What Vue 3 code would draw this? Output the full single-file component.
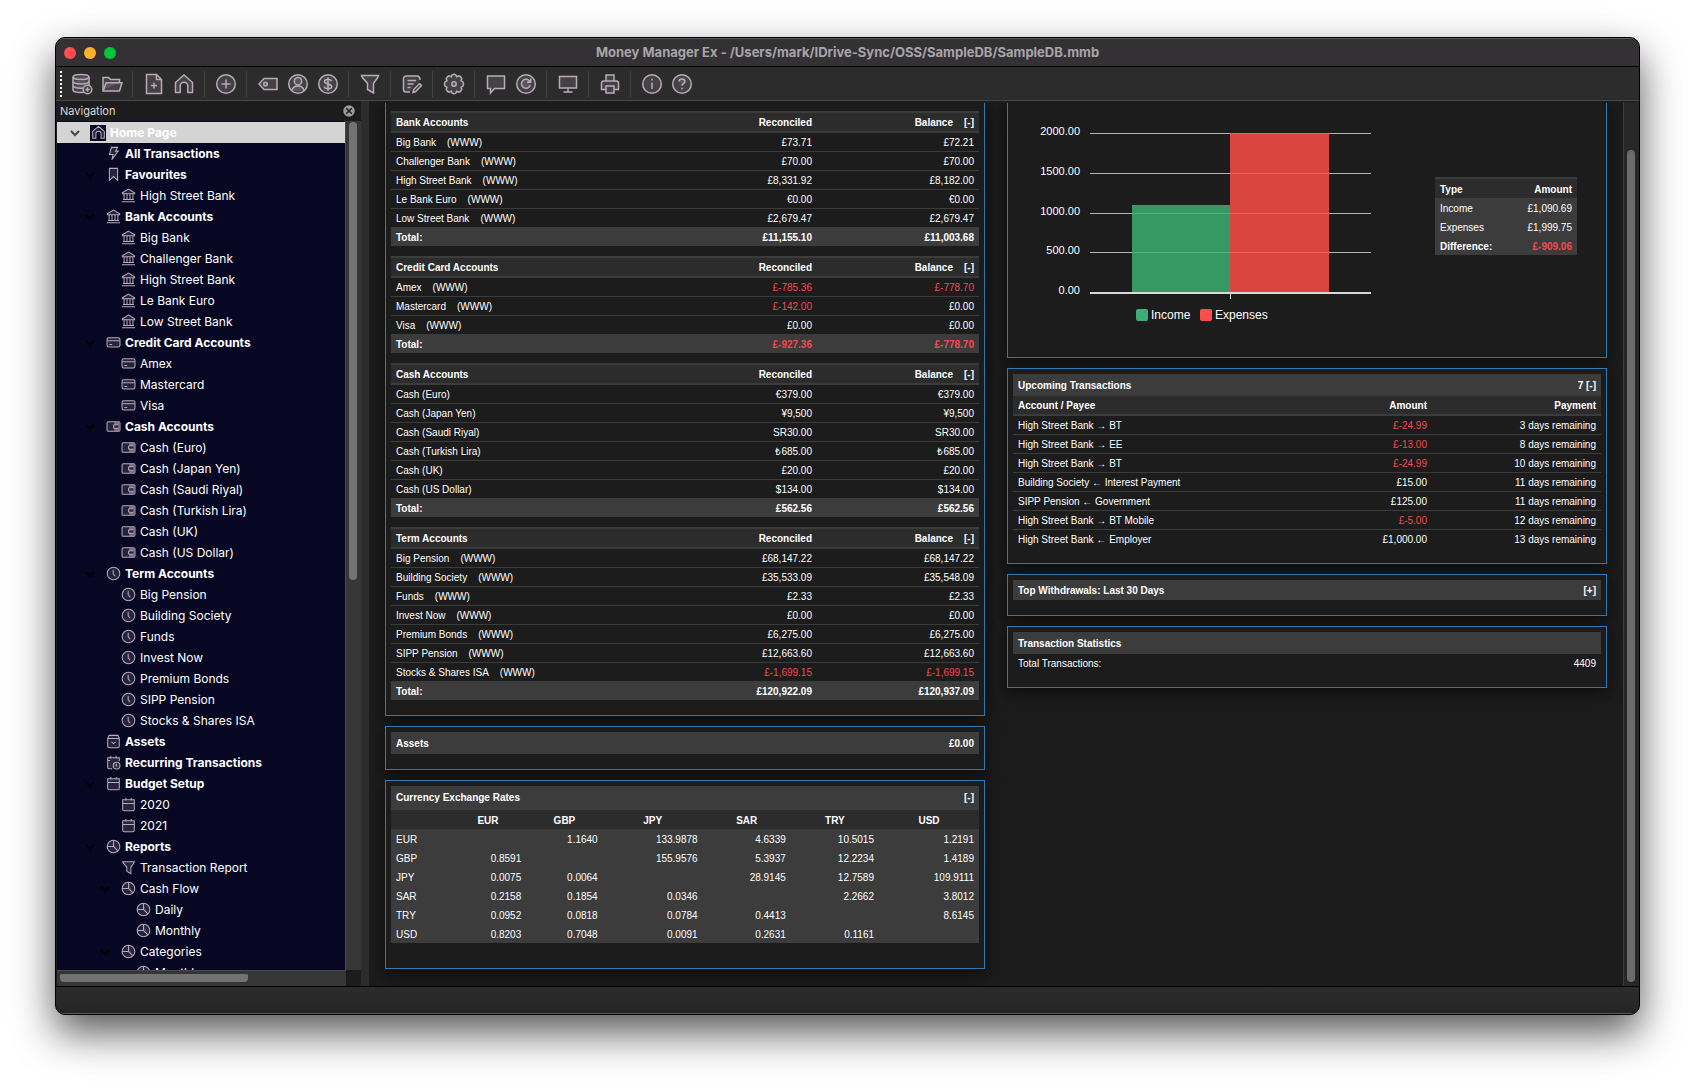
<script setup>
const toolGroups = [
  [
    { id: 'database', label: 'New database' },
    { id: 'folder', label: 'Open database' },
  ],
  [
    { id: 'file', label: 'New account' },
    { id: 'home', label: 'Home page' },
  ],
  [{ id: 'plus', label: 'New transaction' }],
  [
    { id: 'tag', label: 'Categories' },
    { id: 'user', label: 'Payees' },
    { id: 'dollar', label: 'Currencies' },
  ],
  [{ id: 'funnel', label: 'Transaction report' }],
  [{ id: 'edit', label: 'General report manager' }],
  [{ id: 'gear', label: 'Settings' }],
  [
    { id: 'speech', label: 'News' },
    { id: 'refresh', label: 'Refresh' },
  ],
  [{ id: 'monitor', label: 'Full screen' }],
  [{ id: 'printer', label: 'Print' }],
  [
    { id: 'info', label: 'About' },
    { id: 'help', label: 'Help' },
  ],
]

const leaf = (level, icon, names) => names.map((text) => ({ level, icon, text }))
const group = (level, icon, text) => ({ level, icon, text, open: true, bold: level < 2 })

const navigation = [
  { ...group(0, 'home', 'Home Page'), selected: true },
  { level: 1, icon: 'bolt', text: 'All Transactions', bold: true },
  group(1, 'bookmark', 'Favourites'),
  ...leaf(2, 'bank', ['High Street Bank']),
  group(1, 'bank', 'Bank Accounts'),
  ...leaf(2, 'bank', ['Big Bank', 'Challenger Bank', 'High Street Bank', 'Le Bank Euro', 'Low Street Bank']),
  group(1, 'card', 'Credit Card Accounts'),
  ...leaf(2, 'card', ['Amex', 'Mastercard', 'Visa']),
  group(1, 'wallet', 'Cash Accounts'),
  ...leaf(2, 'wallet', ['Cash (Euro)', 'Cash (Japan Yen)', 'Cash (Saudi Riyal)', 'Cash (Turkish Lira)', 'Cash (UK)', 'Cash (US Dollar)']),
  group(1, 'clock', 'Term Accounts'),
  ...leaf(2, 'clock', ['Big Pension', 'Building Society', 'Funds', 'Invest Now', 'Premium Bonds', 'SIPP Pension', 'Stocks & Shares ISA']),
  { level: 1, icon: 'box', text: 'Assets', bold: true },
  { level: 1, icon: 'recurring', text: 'Recurring Transactions', bold: true },
  group(1, 'calendar', 'Budget Setup'),
  ...leaf(2, 'calendar', ['2020', '2021']),
  group(1, 'pie', 'Reports'),
  ...leaf(2, 'funnel', ['Transaction Report']),
  group(2, 'pie', 'Cash Flow'),
  ...leaf(3, 'pie', ['Daily', 'Monthly']),
  group(2, 'pie', 'Categories'),
  ...leaf(3, 'pie', ['Monthly']),
]

const accountTables = [
  {
    title: 'Bank Accounts',
    rows: [
      ['Big Bank', '£73.71', '£72.21', true],
      ['Challenger Bank', '£70.00', '£70.00', true],
      ['High Street Bank', '£8,331.92', '£8,182.00', true],
      ['Le Bank Euro', '€0.00', '€0.00', true],
      ['Low Street Bank', '£2,679.47', '£2,679.47', true],
    ],
    total: ['£11,155.10', '£11,003.68'],
  },
  {
    title: 'Credit Card Accounts',
    rows: [
      ['Amex', '£-785.36', '£-778.70', true],
      ['Mastercard', '£-142.00', '£0.00', true],
      ['Visa', '£0.00', '£0.00', true],
    ],
    total: ['£-927.36', '£-778.70'],
  },
  {
    title: 'Cash Accounts',
    rows: [
      ['Cash (Euro)', '€379.00', '€379.00'],
      ['Cash (Japan Yen)', '¥9,500', '¥9,500'],
      ['Cash (Saudi Riyal)', 'SR30.00', 'SR30.00'],
      ['Cash (Turkish Lira)', '₺685.00', '₺685.00'],
      ['Cash (UK)', '£20.00', '£20.00'],
      ['Cash (US Dollar)', '$134.00', '$134.00'],
    ],
    total: ['£562.56', '£562.56'],
  },
  {
    title: 'Term Accounts',
    rows: [
      ['Big Pension', '£68,147.22', '£68,147.22', true],
      ['Building Society', '£35,533.09', '£35,548.09', true],
      ['Funds', '£2.33', '£2.33', true],
      ['Invest Now', '£0.00', '£0.00', true],
      ['Premium Bonds', '£6,275.00', '£6,275.00', true],
      ['SIPP Pension', '£12,663.60', '£12,663.60', true],
      ['Stocks & Shares ISA', '£-1,699.15', '£-1,699.15', true],
    ],
    total: ['£120,922.09', '£120,937.09'],
  },
]

const currencies = ['EUR', 'GBP', 'JPY', 'SAR', 'TRY', 'USD']
const rates = [
  ['', '1.1640', '133.9878', '4.6339', '10.5015', '1.2191'],
  ['0.8591', '', '155.9576', '5.3937', '12.2234', '1.4189'],
  ['0.0075', '0.0064', '', '28.9145', '12.7589', '109.9111'],
  ['0.2158', '0.1854', '0.0346', '', '2.2662', '3.8012'],
  ['0.0952', '0.0818', '0.0784', '0.4413', '', '8.6145'],
  ['0.8203', '0.7048', '0.0091', '0.2631', '0.1161', ''],
]

const upcoming = [
  ['High Street Bank → BT', '£-24.99', '3 days remaining'],
  ['High Street Bank → EE', '£-13.00', '8 days remaining'],
  ['High Street Bank → BT', '£-24.99', '10 days remaining'],
  ['Building Society ← Interest Payment', '£15.00', '11 days remaining'],
  ['SIPP Pension ← Government', '£125.00', '11 days remaining'],
  ['High Street Bank → BT Mobile', '£-5.00', '12 days remaining'],
  ['High Street Bank ← Employer', '£1,000.00', '13 days remaining'],
]

const gridLines = [
  { y: 30, label: '2000.00' },
  { y: 70, label: '1500.00' },
  { y: 110, label: '1000.00' },
  { y: 149, label: '500.00' },
  { y: 189, label: '0.00' },
]

const isNegative = (amount) => amount.includes('-')
</script>

<template>
  <svg class="sprite" aria-hidden="true">
    <symbol id="database" viewBox="0 0 22 22">
      <path d="M2 4v13c0 1.500 3.600 2.500 8 2.500s8-1 8-2.500V4" />
      <ellipse cx="10" cy="4" rx="8" ry="2.600" />
      <path d="M2 8.300c0 1.500 3.600 2.600 8 2.600s8-1.100 8-2.600M2 12.600c0 1.500 3.600 2.600 8 2.600s8-1.100 8-2.600" />
      <circle class="solid" cx="16.500" cy="16.500" r="4.300" />
      <path d="M16.500 14.300v4.400M14.300 16.500h4.400" />
    </symbol>
    <symbol id="folder" viewBox="0 0 22 22">
      <path d="M2 17V4.500h5.500l2 2h9V10" />
      <path d="M2 18l3.200-8.200H21L18.500 18z" />
    </symbol>
    <symbol id="file" viewBox="0 0 22 22">
      <path d="M3.500 1.500h10l5 5v14h-15zM13.500 1.500v5h5M11 9.500v6M8 12.500h6" />
    </symbol>
    <symbol id="home" viewBox="0 0 22 22">
      <path d="M2.500 9.500L11 2l8.500 7.500v10h-4.700V13a3.800 3.800 0 0 0-7.600 0v6.500H2.500z" />
    </symbol>
    <symbol id="plus" viewBox="0 0 22 22">
      <circle cx="11" cy="11" r="9.300" /><path d="M11 6.500v9M6.500 11h9" />
    </symbol>
    <symbol id="tag" viewBox="0 0 22 22">
      <path d="M2 11l5-5.500h13v11H7z" /><circle cx="8.500" cy="11" r="1.800" />
    </symbol>
    <symbol id="user" viewBox="0 0 22 22">
      <circle cx="11" cy="11" r="9.300" /><circle cx="11" cy="8.200" r="3.700" />
      <path d="M4.800 17.800c.8-3 3.200-4.700 6.200-4.700s5.400 1.700 6.200 4.700" />
    </symbol>
    <symbol id="dollar" viewBox="0 0 22 22">
      <circle cx="11" cy="11" r="9.300" />
      <path d="M14.500 8.200c-.3-1.300-1.600-2-3.500-2s-3.500.8-3.500 2.300c0 3.500 7.200 1.500 7.200 5 0 1.500-1.600 2.400-3.700 2.400s-3.500-.8-3.800-2.200M11 4.300v13.400" />
    </symbol>
    <symbol id="funnel" viewBox="0 0 22 22">
      <path d="M2.500 2.500h17c-.6 3.500-4.200 5.500-5 8v9.500l-6-3.500v-6c-.8-2.500-5.400-4.500-6-8z" />
    </symbol>
    <symbol id="edit" viewBox="0 0 22 22">
      <path d="M19 7V5.500L17.300 3H5a2.500 2.500 0 0 0-2.500 2.500v11A2.500 2.500 0 0 0 5 19h4M6.500 7.500H15M6.500 11h6M6.500 14.500h3" />
      <path d="M12 19.500l.6-3L18.500 10.500l2 2-5.800 6z" />
    </symbol>
    <symbol id="gear" viewBox="0 0 22 22">
      <path d="M9 2c1-.7 3-.7 4 0l.6 1.700 2.300-.9c1.300.4 2.500 1.600 2.900 2.900l-.7 2L20 9c.6 1.200.6 2.800 0 4l-1.900 1.300.7 2c-.4 1.300-1.600 2.500-2.900 2.900l-2.300-.9L13 20c-1 .7-3 .7-4 0l-.6-1.700-2.300.9c-1.300-.4-2.500-1.600-2.900-2.900l.7-2L2 13c-.6-1.200-.6-2.800 0-4l1.900-1.300-.7-2c.4-1.300 1.600-2.500 2.900-2.900l2.300.9z" />
      <circle cx="11" cy="11" r="2.200" />
    </symbol>
    <symbol id="speech" viewBox="0 0 22 22">
      <path d="M2.500 3h17v12.500H9.500L5.500 20v-4.500h-3z" />
    </symbol>
    <symbol id="refresh" viewBox="0 0 22 22">
      <circle cx="11" cy="11" r="9.300" />
      <path d="M15.300 12a4.500 4.500 0 1 1-1.300-4.500l1.500 1.500M15.700 5.500v3.700H12" />
    </symbol>
    <symbol id="monitor" viewBox="0 0 22 22">
      <path d="M2.500 3.500h17v11.500h-17zM11 15v3.800M6.500 19h9" />
    </symbol>
    <symbol id="printer" viewBox="0 0 22 22">
      <path d="M7 8V2h8v6M6.500 16.500h-4V10c0-1.200.8-2 2-2h13c1.200 0 2 .8 2 2v6.500h-4M7 13h8v7H7z" />
    </symbol>
    <symbol id="info" viewBox="0 0 22 22">
      <circle cx="11" cy="11" r="9.300" /><path d="M11 9.500v6.500M11 5.800v1.800" />
    </symbol>
    <symbol id="help" viewBox="0 0 22 22">
      <circle cx="11" cy="11" r="9.300" />
      <path d="M8 8.500C8 6.800 9.300 6 11 6s3 .9 3 2.500c0 2-3 2.200-3 4.200M11 14.700v1.600" />
    </symbol>
    <symbol id="bolt" viewBox="0 0 22 22">
      <path d="M8 2h9l-3 5.500h4L8.500 20l2-7.500H5z" />
    </symbol>
    <symbol id="bookmark" viewBox="0 0 22 22">
      <path d="M5 2h12v17.500l-6-5.500-6 5.500z" />
    </symbol>
    <symbol id="bank" viewBox="0 0 22 22">
      <path d="M2 7l9-5.500L20 7v1.500H2zM4.500 8.500V17M8.800 8.500V17M13.200 8.500V17M17.500 8.500V17M3 17h16M1.500 20h19" />
    </symbol>
    <symbol id="card" viewBox="0 0 22 22">
      <rect x="1.500" y="4" width="19" height="13.500" rx="2.500" /><path d="M2 8.500h18M5 14h4" />
    </symbol>
    <symbol id="wallet" viewBox="0 0 22 22">
      <rect x="1.500" y="4" width="19" height="14" rx="2" />
      <path class="bright" d="M12 4.500h8v13h-8v-3.500h-1.500v-6H12z" />
      <path class="notch" d="M18 8.500h-4.500a2.500 2.500 0 0 0 0 5H18" />
    </symbol>
    <symbol id="clock" viewBox="0 0 22 22">
      <circle cx="11" cy="11" r="9.300" /><path d="M10.500 5.500v6l3 3.500" />
    </symbol>
    <symbol id="box" viewBox="0 0 22 22">
      <path d="M2.500 6.500L4.500 2h13l2 4.500v11c0 1.500-1 2.500-2.500 2.500H5c-1.500 0-2.500-1-2.500-2.500zM2.500 6.500h17M8 11.500l3 2.500 3-2.500" />
    </symbol>
    <symbol id="calendar" viewBox="0 0 22 22">
      <path d="M2.500 4h17v14c0 1-.8 2-2 2h-13c-1.200 0-2-1-2-2zM2.500 9.500h17M7 1.500V5M15 1.500V5" />
    </symbol>
    <symbol id="recurring" viewBox="0 0 22 22">
      <path d="M9 20H4.500c-1.200 0-2-1-2-2V4h17v5M2.500 8H6M7 1.500V5M15 1.500V5" />
      <circle cx="15.500" cy="15.500" r="5" /><path d="M15 13v3h2" />
    </symbol>
    <symbol id="pie" viewBox="0 0 22 22">
      <circle cx="11" cy="11" r="9.300" /><path d="M11 1.700V11l6.500 6.500M1.700 11H11" />
    </symbol>
    <symbol id="chevron" viewBox="0 0 16 16">
      <path d="M4 6l4 4 4-4" />
    </symbol>
  </svg>

  <main class="window">
    <header class="titlebar">
      <div class="lights">
        <button class="light red" aria-label="Close"></button>
        <button class="light amber" aria-label="Minimise"></button>
        <button class="light green" aria-label="Zoom"></button>
      </div>
      <h1>Money Manager Ex - /Users/mark/IDrive-Sync/OSS/SampleDB/SampleDB.mmb</h1>
    </header>

    <nav class="toolbar" aria-label="Toolbar">
      <span class="grip"></span>
      <div v-for="(tools, index) in toolGroups" :key="index" class="tool-group">
        <button v-for="tool in tools" :key="tool.id" class="tool" :aria-label="tool.label">
          <svg class="icon"><use :href="'#' + tool.id" /></svg>
        </button>
      </div>
    </nav>

    <div class="workspace">
      <aside class="sidebar">
        <div class="pane-title">
          <h2>Navigation</h2>
          <button class="pane-close" aria-label="Close navigation">
            <svg viewBox="0 0 14 14"><circle cx="7" cy="7" r="6.500" /><path d="M4.200 4.200l5.600 5.600M9.800 4.200L4.200 9.800" /></svg>
          </button>
        </div>
        <div class="tree-area">
          <ul class="tree">
            <li v-for="(item, index) in navigation" :key="index" class="node" :class="['level-' + item.level, { bold: item.bold, selected: item.selected }]">
              <span class="twisty"><svg v-if="item.open"><use href="#chevron" /></svg></span>
              <a href="#"><svg class="icon"><use :href="'#' + item.icon" /></svg>{{ item.text }}</a>
            </li>
          </ul>
          <div class="vtrack"><div class="nav-vthumb"></div></div>
        </div>
        <div class="bottom-track"><div class="htrack"><div class="hthumb"></div></div></div>
      </aside>

      <div class="sash"></div>

      <section class="report">
        <div class="column">
          <article class="card cut accounts">
            <table v-for="table in accountTables" :key="table.title">
              <thead>
                <tr class="ruled">
                  <th>{{ table.title }}</th>
                  <th class="num">Reconciled</th>
                  <th class="num wide">Balance<a href="#" class="toggle">[-]</a></th>
                </tr>
              </thead>
              <tbody class="lined">
                <tr v-for="row in table.rows" :key="row[0]">
                  <td><a href="#">{{ row[0] }}</a><a v-if="row[3]" href="#" class="site">(WWW)</a></td>
                  <td class="num" :class="{ negative: isNegative(row[1]) }">{{ row[1] }}</td>
                  <td class="num" :class="{ negative: isNegative(row[2]) }">{{ row[2] }}</td>
                </tr>
              </tbody>
              <tfoot>
                <tr>
                  <th>Total:</th>
                  <th v-for="(sum, index) in table.total" :key="index" class="num" :class="{ negative: isNegative(sum) }">{{ sum }}</th>
                </tr>
              </tfoot>
            </table>
          </article>

          <article class="card">
            <div class="caption"><h3>Assets</h3><b>£0.00</b></div>
          </article>

          <article class="card rates">
            <div class="caption tall"><h3>Currency Exchange Rates</h3><a href="#">[-]</a></div>
            <table>
              <colgroup>
                <col class="c-name" /><col class="c-eur" /><col class="c-gbp" /><col class="c-jpy" /><col class="c-sar" /><col class="c-try" /><col />
              </colgroup>
              <thead>
                <tr>
                  <th></th>
                  <th v-for="code in currencies" :key="code">{{ code }}</th>
                </tr>
              </thead>
              <tbody>
                <tr v-for="(row, index) in rates" :key="index">
                  <td>{{ currencies[index] }}</td>
                  <td v-for="(rate, col) in row" :key="col" class="num">{{ rate }}</td>
                </tr>
              </tbody>
            </table>
          </article>
        </div>

        <div class="column">
          <article class="card cut summary">
            <svg class="chart" viewBox="0 0 400 254" role="img" aria-label="Income and expenses">
              <g v-for="line in gridLines" :key="line.y">
                <text x="72" :y="line.y + 2" text-anchor="end">{{ line.label }}</text>
                <rect class="grid" :class="{ base: line.y === 189 }" x="82" :y="line.y" width="281" />
              </g>
              <rect class="bar-income" x="124" y="102" width="98" height="87" />
              <rect class="bar-expenses" x="222" y="30" width="99" height="159" />
              <rect class="tick" x="222" y="191" width="1" height="5" />
              <rect class="key-income" x="128" y="206" width="12" height="12" rx="2" />
              <text class="legend" x="143" y="216">Income</text>
              <rect class="key-expenses" x="192" y="206" width="12" height="12" rx="2" />
              <text class="legend" x="207" y="216">Expenses</text>
            </svg>
            <table class="totals">
              <thead>
                <tr><th>Type</th><th class="num">Amount</th></tr>
              </thead>
              <tbody>
                <tr><td>Income</td><td class="num">£1,090.69</td></tr>
                <tr><td>Expenses</td><td class="num">£1,999.75</td></tr>
                <tr><th>Difference:</th><th class="num negative">£-909.06</th></tr>
              </tbody>
            </table>
          </article>

          <article class="card upcoming">
            <div class="caption"><h3>Upcoming Transactions</h3><b>7 <a href="#">[-]</a></b></div>
            <table>
              <thead>
                <tr>
                  <th>Account / Payee</th>
                  <th class="num">Amount</th>
                  <th class="num wide">Payment</th>
                </tr>
              </thead>
              <tbody class="lined">
                <tr v-for="(row, index) in upcoming" :key="index">
                  <td>{{ row[0] }}</td>
                  <td class="num" :class="{ negative: isNegative(row[1]) }">{{ row[1] }}</td>
                  <td class="num">{{ row[2] }}</td>
                </tr>
              </tbody>
            </table>
          </article>

          <article class="card">
            <div class="caption short"><h3>Top Withdrawals: Last 30 Days</h3><a href="#">[+]</a></div>
          </article>

          <article class="card">
            <div class="caption"><h3>Transaction Statistics</h3></div>
            <div class="stat"><span>Total Transactions:</span><span>4409</span></div>
          </article>
        </div>
      </section>

      <div class="page-track"><div class="page-thumb"></div></div>
    </div>

    <footer class="statusbar"></footer>
  </main>
</template>

<style>
body {
  margin: 0;
  background: #fff;
}
#app {
  overflow: hidden;
}
</style>

<style scoped>
.sprite {
  position: absolute;
  width: 0;
  height: 0;
}
.window {
  box-sizing: border-box;
  display: flex;
  flex-direction: column;
  height: calc(100vh - 110px);
  margin: 37px 55px 73px;
  border: 1px solid #000;
  border-radius: 10px;
  overflow: hidden;
  background: #1c1c1c;
  color: #fff;
  font-family: Inter, "Liberation Sans", sans-serif;
  box-shadow: 0 18px 40px rgba(0, 0, 0, 0.66);
}
button {
  padding: 0;
  border: 0;
  background: none;
}
a {
  color: inherit;
  text-decoration: none;
}
h1,
h2,
h3 {
  margin: 0;
}
.icon {
  fill: rgba(200, 185, 200, 0.16);
  stroke: #b9abb9;
  stroke-width: 1.5;
}
.solid {
  fill: #3a383a;
}
.bright {
  fill: #7f7288;
  stroke: none;
}
.notch {
  fill: #2a2440;
}

/* Title bar */
.titlebar {
  display: flex;
  flex: none;
  align-items: center;
  height: 29px;
  padding: 0 8px;
  border-top: 1px solid #5c5a5d;
  border-bottom: 1px solid #000;
  background: #343135;
  box-sizing: border-box;
}
.titlebar h1 {
  flex: 1;
  padding: 0 52px 2px 0;
  text-align: center;
  font-size: 13px;
  font-weight: 700;
  line-height: 24px;
  color: #a7a5a8;
}
.lights {
  display: flex;
  gap: 8px;
}
.light {
  width: 12px;
  height: 12px;
  border-radius: 50%;
}
.red {
  background: #ff4e4d;
}
.amber {
  background: #ffb12e;
}
.green {
  background: #00c73a;
}

/* Toolbar */
.toolbar {
  display: flex;
  flex: none;
  align-items: center;
  height: 33px;
  padding-left: 4px;
  background: #2c2c2c;
  border-bottom: 1px solid #484848;
}
.grip {
  width: 2px;
  height: 26px;
  margin-right: 5px;
  background: repeating-linear-gradient(#fff 0 2px, transparent 2px 4px);
}
.tool-group {
  display: flex;
}
.tool-group + .tool-group {
  margin-left: 5px;
  padding-left: 6px;
  border-left: 1px solid #444;
}
.tool {
  display: flex;
  align-items: center;
  justify-content: center;
  width: 30px;
  height: 26px;
}
.tool .icon {
  width: 22px;
  height: 22px;
}

/* Navigation pane */
.workspace {
  display: flex;
  flex: 1;
  min-height: 0;
  border-bottom: 1px solid #000;
}
.sidebar {
  display: flex;
  flex: none;
  flex-direction: column;
  width: 304px;
  padding-left: 1px;
  background: #1c1c1c;
}
.pane-title {
  display: flex;
  flex: none;
  align-items: center;
  justify-content: space-between;
  height: 20px;
  padding: 0 5px 0 3px;
}
.pane-title h2 {
  font-size: 11px;
  font-weight: 400;
  line-height: 20px;
  color: #d8d8d8;
}
.pane-close svg {
  display: block;
  width: 14px;
  height: 14px;
  fill: #9a9a9a;
  stroke: #1c1c1c;
  stroke-width: 1.5;
}
.tree-area {
  display: flex;
  flex: 1;
  min-height: 0;
}
.tree {
  flex: 1;
  margin: 0;
  padding: 1px 0 0;
  overflow: hidden;
  list-style: none;
  background: #080723;
}
.node {
  display: flex;
  align-items: center;
  height: 21px;
  font-size: 12px;
  line-height: 21px;
  white-space: nowrap;
}
.node a {
  display: flex;
  align-items: center;
  gap: 4px;
}
.node .icon {
  width: 15px;
  height: 15px;
  padding: 0 0 1px 1px;
}
.level-0 {
  padding-left: 10px;
}
.level-1 {
  padding-left: 25px;
}
.level-2 {
  padding-left: 40px;
}
.level-3 {
  padding-left: 55px;
}
.bold {
  font-weight: 700;
}
.selected {
  background: #d4d4d4;
}
.selected .icon {
  background: #080723;
}
.twisty {
  width: 16px;
  height: 16px;
  margin-right: 7px;
}
.twisty svg {
  display: block;
  width: 16px;
  height: 16px;
  fill: none;
  stroke: #000;
  stroke-width: 2;
}
.selected .twisty svg {
  stroke: #444;
}
.vtrack {
  width: 8px;
  padding: 1px 4px 0 3px;
  border-left: 1px solid #484848;
  background: #363636;
}
.nav-vthumb {
  height: 54%;
  border-radius: 4px;
  background: #737373;
}
.bottom-track {
  flex: none;
  height: 16px;
  padding-right: 15px;
}
.htrack {
  height: 15px;
  padding-left: 3px;
  border-top: 1px solid #484848;
  background: #363636;
}
.hthumb {
  width: 188px;
  height: 8px;
  border-radius: 4px;
  background: #737373;
  border-top: 3px solid #363636;
}
.sash {
  flex: none;
  width: 8px;
  background: #2c2c2c;
}

/* Report page */
.report {
  display: flex;
  flex: 1;
  align-items: flex-start;
  gap: 22px;
  min-width: 0;
  margin-top: 2px;
  padding: 0 16px;
  overflow: hidden;
  font: 10px/16px "Liberation Sans", Arial, sans-serif;
}
.column {
  display: flex;
  flex: 1;
  flex-direction: column;
  gap: 10px;
  min-width: 0;
}
.card {
  padding: 5px 5px 15px;
  border: 1px solid #3079b5;
  background: #1c1c1c;
  box-shadow: 0 4px 8px rgba(0, 0, 0, 0.2), 0 6px 20px rgba(0, 0, 0, 0.4);
}
.cut {
  padding-top: 8px;
  border-top: 0;
}
table {
  width: 100%;
  border-spacing: 0;
  table-layout: fixed;
}
th,
td {
  height: 16px;
  padding: 2px 5px 0;
  text-align: left;
  white-space: nowrap;
}
.num {
  text-align: right;
}
.negative {
  color: #f24a50;
}
.accounts {
  display: flex;
  flex-direction: column;
  gap: 10px;
}
.ruled th {
  border: solid #3c3c3c;
  border-width: 2px 0;
  background: #2c2c2c;
}
.wide {
  width: 152px;
}
.upcoming .wide {
  width: 159px;
}
.toggle {
  margin-left: 11px;
}
.site {
  margin-left: 11px;
}
.lined td {
  border-bottom: 1px solid #3c3c3c;
}
.upcoming tr:last-child td {
  border-bottom: 0;
}
.upcoming th {
  border-bottom: 2px solid #3c3c3c;
  background: #2c2c2c;
}
tfoot th {
  background: #3c3c3c;
}
.caption {
  display: flex;
  justify-content: space-between;
  padding: 4px 5px 2px;
  background: #3c3c3c;
  font-weight: 700;
}
.caption h3 {
  font-size: 10px;
}
.tall {
  padding: 4px 5px;
}
.short {
  padding: 3px 5px 1px;
}
.stat {
  display: flex;
  justify-content: space-between;
  padding: 2px 5px 0;
}
.rates {
  padding-bottom: 25px;
}
.rates thead th {
  height: 17px;
  background: #2c2c2c;
  text-align: center;
}
.rates td {
  height: 17px;
  background: #3c3c3c;
}
.c-name {
  width: 10%;
}
.c-eur,
.c-gbp {
  width: 13%;
}
.c-jpy {
  width: 17%;
}
.c-sar,
.c-try {
  width: 15%;
}

/* Income and expenses summary */
.summary {
  display: flex;
  align-items: flex-start;
  justify-content: space-between;
  padding: 0 29px 0 0;
}
.chart {
  width: 400px;
  height: 254px;
  fill: #fff;
  font-size: 11px;
}
.legend {
  font-size: 12px;
}
.grid {
  height: 1px;
  fill: #b4b4b4;
}
.base {
  height: 2px;
  fill: #d8d8d8;
}
.bar-income {
  fill: #3cb371;
  opacity: 0.82;
}
.bar-expenses {
  fill: #ff4d49;
  opacity: 0.84;
}
.tick {
  fill: #d8d8d8;
}
.key-income {
  fill: #3dac77;
}
.key-expenses {
  fill: #ff4d49;
}
.totals {
  width: 142px;
  margin-top: 74px;
}
.totals thead th {
  height: 17px;
  border-top: 2px solid #3c3c3c;
  background: #2c2c2c;
}
.totals tbody {
  background: #3c3c3c;
}
.totals tbody :is(td, th) {
  height: 17px;
}

/* Page scroll bar and status bar */
.page-track {
  flex: none;
  width: 8px;
  margin-top: 1px;
  padding: 48px 4px 4px 3px;
  border-left: 1px solid #3c3c3c;
  background: #272727;
}
.page-thumb {
  height: 100%;
  border-radius: 4px;
  background: #6b6b6b;
}
.statusbar {
  flex: none;
  height: 26px;
  background: linear-gradient(#2c2c2c, #252525);
  border-bottom: 1px solid #5c5a5d;
}
</style>
